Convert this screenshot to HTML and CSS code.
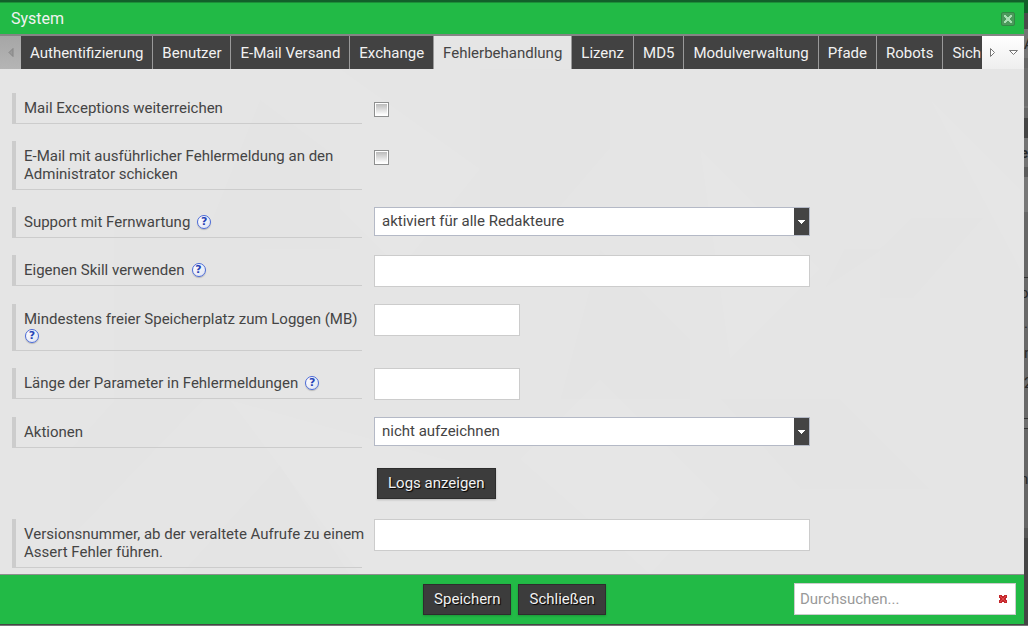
FILE: index.html
```html
<!DOCTYPE html>
<html lang="de">
<head>
<meta charset="utf-8">
<meta name="viewport" content="width=device-width, initial-scale=1">
<title>System</title>
<link rel="stylesheet" href="styles.css">
</head>
<body>
<div class="page">
  <div class="page-top" aria-hidden="true"></div>
  <main class="dialog">
    <header class="titlebar">
      <h1 class="title">System</h1>
      <button class="close" type="button" aria-label="Fenster schließen">
        <svg width="14" height="14" viewBox="0 0 14 14"><rect x=".5" y=".5" width="13" height="13" rx="1.500" fill="#4c9a5c" stroke="#338846"/><path d="M3 3h2v1h1v1h2V4h1V3h2v2h-1v1H9v2h1v1h1v2H9v-1H8V9H6v1H5v1H3V9h1V8h1V6H4V5H3z" fill="#a9dfb4"/></svg>
      </button>
    </header>
    <nav class="tabbar">
      <button class="scroll-left" type="button" aria-label="Zurück" disabled>
        <svg width="6" height="9" viewBox="0 0 6 9"><path d="M5 .5v8L1 4.500z" fill="#999" stroke="#858585"/></svg>
      </button>
      <div class="tabs">
        <a class="tab" href="#auth">Authentifizierung</a>
        <a class="tab" href="#benutzer">Benutzer</a>
        <a class="tab" href="#versand">E-Mail Versand</a>
        <a class="tab" href="#exchange">Exchange</a>
        <a class="tab tab-active" href="#fehler" aria-current="page">Fehlerbehandlung</a>
        <a class="tab" href="#lizenz">Lizenz</a>
        <a class="tab" href="#md5">MD5</a>
        <a class="tab" href="#module">Modulverwaltung</a>
        <a class="tab" href="#pfade">Pfade</a>
        <a class="tab" href="#robots">Robots</a>
        <a class="tab" href="#sicherheit">Sich</a>
      </div>
      <div class="tab-tools">
        <button class="tool" type="button" aria-label="Weiter">
          <svg width="6" height="9" viewBox="0 0 6 9"><path d="M.5 .5v8l4-4z" fill="#fff" stroke="#777"/></svg>
        </button>
        <button class="tool" type="button" aria-label="Alle Reiter">
          <svg width="9" height="6" viewBox="0 0 9 6"><path d="M.5 .5h8l-4 4z" fill="#fff" stroke="#777"/></svg>
        </button>
      </div>
    </nav>
    <form class="form" id="settings">
      <svg class="pattern" viewBox="0 0 1024 505" preserveAspectRatio="xMidYMid slice" aria-hidden="true">
        <g fill="#000" fill-opacity=".005">
          <path d="M114 155h146v176H114zM260 30l80 60v90H200zM480 0h130v80l-60 70h-70z"/>
          <path d="M911 149h73l-70 80H880v-50zM844 180h40l-60 40zM114 331h90L70 470V380z"/>
          <path d="M720 330h120l90 90H800zM180 505l100-110 70 110zM600 180l90 90v60H560z"/>
        </g>
        <g fill="#fff" fill-opacity=".05">
          <path d="M930 30l90 90v80zM340 0l140 100-80 100-60-60zM700 80l120 120-90 90z"/>
          <path d="M230 331l130 174h120V400zM520 390l80-80 120 120-70 75z"/>
        </g>
      </svg>
      <div class="row">
        <div class="caption"><label for="mailex">Mail Exceptions weiterreichen</label></div>
        <input class="check" type="checkbox" id="mailex">
      </div>
      <div class="row">
        <div class="caption"><label for="mailadmin">E-Mail mit ausführlicher Fehlermeldung an den Administrator schicken</label></div>
        <input class="check" type="checkbox" id="mailadmin">
      </div>
      <div class="row">
        <div class="caption"><label for="support">Support mit Fernwartung</label><button class="help" type="button">?</button></div>
        <div class="select-box">
          <select class="select" id="support"><option>aktiviert für alle Redakteure</option></select>
          <svg class="arrow" viewBox="0 0 15 27"><path d="M0 0h15v27H0z" fill="#444"/><path d="M4 12h7v1h-1v1H9v1H8v1H7v-1H6v-1H5v-1H4z" fill="#fff"/></svg>
        </div>
      </div>
      <div class="row">
        <div class="caption"><label for="skill">Eigenen Skill verwenden</label><button class="help" type="button">?</button></div>
        <input class="text" type="text" id="skill">
      </div>
      <div class="row">
        <div class="caption"><label for="space">Mindestens freier Speicherplatz zum Loggen (MB)</label><button class="help" type="button">?</button></div>
        <input class="text text-short" type="text" id="space">
      </div>
      <div class="row">
        <div class="caption"><label for="length">Länge der Parameter in Fehlermeldungen</label><button class="help" type="button">?</button></div>
        <input class="text text-short" type="text" id="length">
      </div>
      <div class="row">
        <div class="caption"><label for="actions">Aktionen</label></div>
        <div class="select-box">
          <select class="select" id="actions"><option>nicht aufzeichnen</option></select>
          <svg class="arrow" viewBox="0 0 15 27"><path d="M0 0h15v27H0z" fill="#444"/><path d="M4 12h7v1h-1v1H9v1H8v1H7v-1H6v-1H5v-1H4z" fill="#fff"/></svg>
        </div>
      </div>
      <div class="row row-action">
        <button class="button" type="button">Logs anzeigen</button>
      </div>
      <div class="row">
        <div class="caption"><label for="version">Versionsnummer, ab der veraltete Aufrufe zu einem Assert Fehler führen.</label></div>
        <input class="text" type="text" id="version">
      </div>
    </form>
    <footer class="footer">
      <div class="actions">
        <button class="button" type="submit" form="settings">Speichern</button>
        <button class="button" type="button">Schließen</button>
      </div>
      <div class="search">
        <input class="search-input" type="text" placeholder="Durchsuchen..." aria-label="Durchsuchen">
        <button class="clear" type="button" aria-label="Suche leeren">
          <svg width="8" height="8" viewBox="0 0 8 8"><path d="M0 0h3v1h2V0h3v3H7v2h1v3H5V7H3v1H0V5h1V3H0z" fill="#c3272b"/><path d="M1 1l6 6M7 1L1 7" stroke="#e0484b"/></svg>
        </button>
      </div>
    </footer>
  </main>
  <div class="backdrop" aria-hidden="true">
    <span>A</span>
    <b>e</b>
    <p>o<br>.<br>n<br>2</p>
    <i>n</i>
  </div>
  <div class="page-bottom" aria-hidden="true"></div>
</div>
</body>
</html>
```
FILE: styles.css
```css
* {
  box-sizing: border-box;
}

body {
  margin: 0;
  font: 15px/18px Roboto, "Liberation Sans", sans-serif;
  color: #444;
}

button,
input,
select {
  margin: 0;
  font: inherit;
  color: inherit;
}

button {
  padding: 0;
  border: 0;
  background: none;
}

svg {
  display: block;
}

.page {
  display: grid;
  grid-template-columns: minmax(0, 1fr) 4px;
  grid-template-rows: 2px 1fr 2px;
  min-height: 100vh;
}

.page-top {
  grid-column: 1 / -1;
  background: #12602a;
}

.page-bottom {
  grid-column: 1 / -1;
  background: linear-gradient(#454545 50%, #777 50%);
}

/* Dimmed page next to the dialog */
.backdrop {
  display: flex;
  flex-direction: column;
  padding-top: 27px;
  overflow: hidden;
  background: linear-gradient(#12602a 11px, #4b4b4b 11px 27px, #757575 27px 56px, #666 56px 66px, #6e6e6e 66px 104px, #777 104px 106px, #666 106px 116px, #444 116px 136px, #737373 136px 165px, #5c5c5c 165px 175px, #777 175px 210px, #666 210px 275px, #333 275px 276px, #696969 276px 416px, #333 416px 417px, #6e6e6e 417px 426px, #333 426px 427px, #666 427px 526px, #575757 526px 536px, #454545 536px);
  color: #2a2a2a;
  font-style: normal;
  line-height: 30px;
  text-indent: -4px;
}

.backdrop span {
  text-indent: 0;
}

.backdrop b {
  margin-top: 79px;
}

.backdrop p {
  margin: 110px 0 66px;
}

.backdrop i {
  font-style: normal;
}

.dialog {
  display: flex;
  flex-direction: column;
  min-width: 0;
  border-top: 1px solid #1c8f38;
}

.titlebar {
  display: flex;
  align-items: center;
  justify-content: space-between;
  height: 31px;
  padding: 0 9px 0 11px;
  background: #22ba46;
}

.title {
  margin: 0;
  font-size: 16px;
  font-weight: 400;
  color: #f2f2f2;
}

.tabbar {
  display: flex;
  height: 35px;
  border-top: 2px solid #858585;
}

.scroll-left {
  display: flex;
  align-items: center;
  flex: none;
  width: 21px;
  padding-left: 8px;
  background: linear-gradient(#a6a6a6, #b5b5b5);
}

.tabs {
  display: flex;
  flex: 1;
  min-width: 0;
  overflow: hidden;
  background: #424242;
}

.tab {
  flex: none;
  padding: 8px 9px 7px;
  border-right: 1px solid #999;
  background: #424242;
  color: #f2f2f2;
  text-decoration: none;
}

.tab:last-child {
  padding-right: 0;
  border-right: 0;
}

.tab-active {
  background: #e5e5e5;
  color: #444;
}

.tab-tools {
  display: flex;
  flex: none;
  width: 42px;
  background: linear-gradient(#fff, #eee);
}

.tool {
  display: flex;
  flex: 1;
  align-items: center;
  justify-content: center;
}

.form {
  position: relative;
  display: flex;
  flex: 1;
  flex-direction: column;
  gap: 17px;
  padding: 24px 12px 6px;
  background: #e5e5e5;
}

.pattern {
  position: absolute;
  inset: 0;
  width: 100%;
  height: 100%;
}

.row {
  position: relative;
  display: flex;
  align-items: flex-start;
  gap: 12px;
}

.row-action {
  padding: 3px 0 3px 365px;
}

.caption {
  display: flex;
  flex: 0 1 350px;
  flex-wrap: wrap;
  align-items: center;
  column-gap: 10px;
  padding: 6px 0 6px 8px;
  border-bottom: 1px solid #ccc;
  border-left: 4px solid #ccc;
}

.caption label {
  margin-right: -4px;
}

.help {
  width: 14px;
  height: 14px;
  margin: 1px;
  border: 1px solid #4a6ad8;
  border-radius: 50%;
  background: linear-gradient(135deg, #fff, #dfe3f2);
  box-shadow: 0 1px 1px rgba(0, 0, 0, .2);
  color: #2743b5;
  font: bold 11px/12px "DejaVu Sans", sans-serif;
  text-align: center;
}

.check {
  appearance: none;
  width: 15px;
  height: 15px;
  margin-top: 9px;
  padding: 1px;
  border: 1px solid #8e8f8f;
  background: linear-gradient(#bbb, #fff) content-box, #fff;
}

.text,
.select-box {
  flex: 0 1 436px;
  min-width: 0;
}

.text {
  height: 32px;
  padding: 0 7px;
  border: 1px solid #ccc;
  background: #fff;
}

.text-short {
  flex-basis: 146px;
}

.select-box {
  position: relative;
}

.select {
  display: block;
  appearance: none;
  width: 100%;
  height: 29px;
  padding: 0 22px 2px 7px;
  border: 1px solid #b4b9c6;
  border-radius: 0;
  background: #fff;
}

.arrow {
  position: absolute;
  top: 1px;
  right: 1px;
  width: 15px;
  height: 27px;
  pointer-events: none;
}

.button {
  height: 31px;
  padding: 0 10px 1px;
  border: 1px solid #2d2d2d;
  background: #3c3c3c;
  box-shadow: 0 1px 2px rgba(0, 0, 0, .2);
  color: #f2f2f2;
  text-shadow: 1px 1px 1px #000;
}

.footer {
  display: grid;
  grid-template-columns: 1fr auto 1fr;
  align-items: center;
  height: 50px;
  padding: 0 8px 1px 13px;
  border-top: 1px solid #8e8e8e;
  background: #22ba46;
}

.actions {
  display: flex;
  grid-column: 2;
  gap: 7px;
}

.search {
  display: flex;
  align-items: center;
  justify-self: end;
  width: 222px;
  max-width: 100%;
  height: 32px;
  border: 1px solid #ccc;
  background: #fff;
}

.search-input {
  flex: 1;
  min-width: 0;
  padding: 0 5px;
  border: 0;
  background: none;
}

.search-input::placeholder {
  color: #999;
}

.clear {
  padding: 0 8px;
}
```
